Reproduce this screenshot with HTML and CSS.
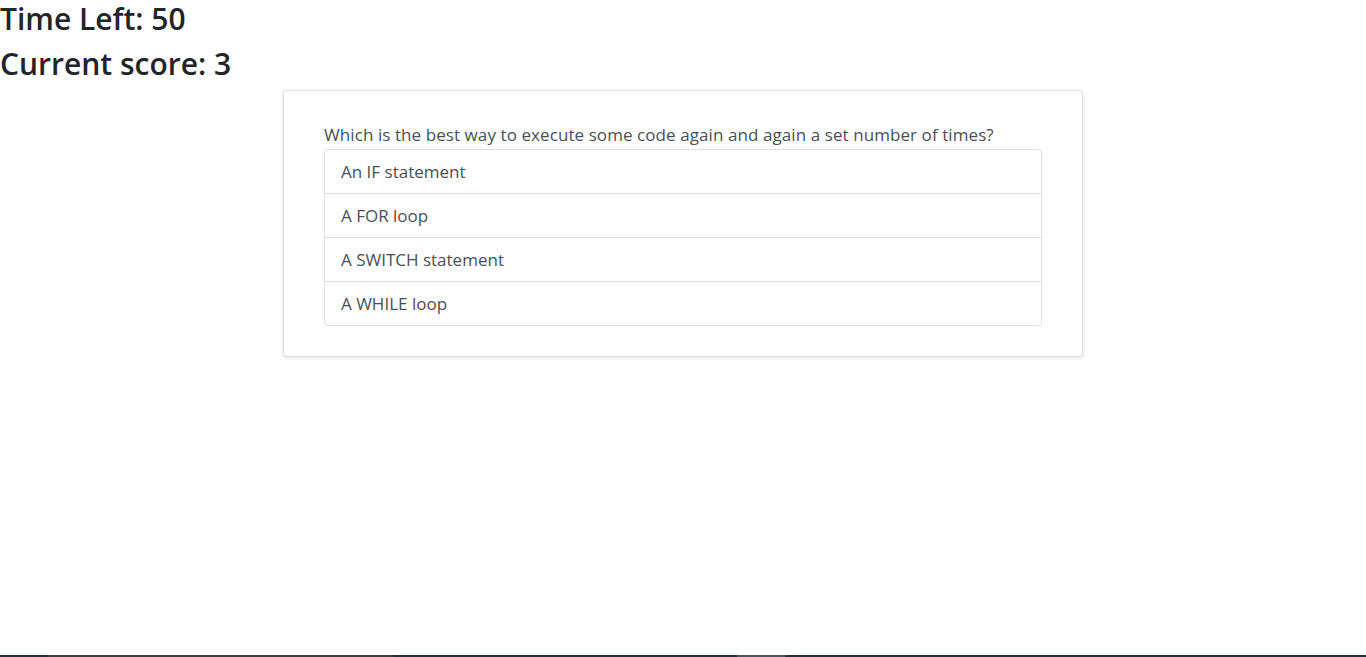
FILE: index.html
```html
<!DOCTYPE html>
<html>
<head>
<meta charset="utf-8">
<link rel="stylesheet" href="styles.css">
</head>
<body>
<div class="page">
  <h2 class="stat">Time Left: 50</h2>
  <h2 class="stat">Current score: 3</h2>
  <div class="card">
    <p class="question">Which is the best way to execute some code again and again a set number of times?</p>
    <ul class="answers">
      <li class="answer">An IF statement</li>
      <li class="answer">A FOR loop</li>
      <li class="answer">A SWITCH statement</li>
      <li class="answer">A WHILE loop</li>
    </ul>
  </div>
  <div class="spacer"></div>
  <div class="taskbar">
    <span class="seg seg-a"></span>
    <span class="seg seg-b"></span>
  </div>
</div>
</body>
</html>
```

FILE: styles.css
```css
* { box-sizing: border-box; }
html, body { margin: 0; padding: 0; }
body {
  font-family: "Open Sans", "Noto Sans", sans-serif;
  color: #212529;
  background: #fff;
}
.page {
  min-height: 100vh;
  display: flex;
  flex-direction: column;
}
.stat {
  margin: 0 0 9px 0;
  padding-top: 1px;
  font-size: 30px;
  line-height: 36px;
  font-weight: 600;
  color: #212529;
}
.stat + .stat { padding-top: 0; margin-bottom: 8px; }
.card {
  width: 800px;
  margin: 0 auto;
  border: 1px solid rgba(0,0,0,.125);
  border-radius: 4px;
  box-shadow: 0 1px 4px rgba(0,0,0,.12);
  padding: 33px 40px 30px 40px;
  background: #fff;
}
.question {
  margin: 0;
  padding-bottom: 3px;
  font-size: 17px;
  line-height: 22px;
  letter-spacing: 0.08px;
  color: #495057;
  white-space: nowrap;
}
.answers {
  list-style: none;
  margin: 0;
  padding: 0;
  border: 1px solid rgba(0,0,0,.125);
  border-radius: 4px;
}
.answer {
  padding: 10px 16px 9px 16px;
  font-size: 17px;
  line-height: 24px;
  color: #495057;
  border-bottom: 1px solid rgba(0,0,0,.125);
}
.answer:last-child { border-bottom: none; }
.spacer { flex: 1; }
.taskbar {
  height: 2px;
  background: #22313a;
  display: flex;
}
.seg { height: 2px; display: block; }
.seg-a { margin-left: 48px; width: 345px; background: #3d3e3f; }
.seg-b { margin-left: 344px; width: 48px; background: #4a5662; }
```
